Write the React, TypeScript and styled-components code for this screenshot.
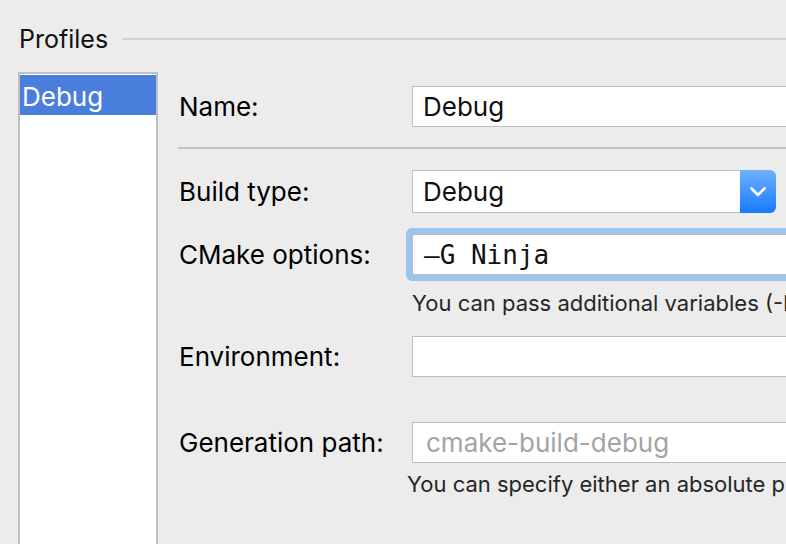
import React from "react";
import styled, { createGlobalStyle } from "styled-components";

const GlobalStyle = createGlobalStyle`
  html, body {
    margin: 0;
    padding: 0;
    background: #ececec;
  }
  body {
    width: 786px;
    height: 544px;
    overflow: hidden;
    font-family: Inter, "Liberation Sans", sans-serif;
    -webkit-font-smoothing: antialiased;
  }
`;

const Page = styled.div`
  width: 786px;
  height: 544px;
  overflow: hidden;
  box-sizing: border-box;
  padding-left: 18px;
  display: flex;
  flex-direction: column;
  background: #ececec;
`;

const Legend = styled.div`
  display: flex;
  align-items: center;
  height: 30px;
  margin-top: 24px;
  padding-left: 1px;
`;

const LegendTitle = styled.span`
  font-size: 25px;
  line-height: 30px;
  color: #111;
`;

const LegendRule = styled.div`
  flex: 1;
  height: 2px;
  margin-left: 14px;
  margin-top: 0px;
  background: #d2d2d2;
`;

const Main = styled.div`
  flex: 1;
  display: flex;
  margin-top: 18px;
  min-height: 0;
`;

const ProfileList = styled.div`
  width: 140px;
  flex: none;
  box-sizing: border-box;
  border: 2px solid #c1c1c1;
  border-bottom: none;
  background: #fff;
  padding-top: 1px;
  height: 520px;
`;

const ProfileItem = styled.div<{ $selected?: boolean }>`
  height: 40px;
  display: flex;
  align-items: center;
  padding-left: 2px;
  padding-top: 2px;
  box-sizing: border-box;
  font-size: 26px;
  color: ${(p) => (p.$selected ? "#fff" : "#000")};
  background: ${(p) => (p.$selected ? "#4a7edc" : "transparent")};
`;

const Form = styled.div`
  flex: 1;
  display: flex;
  flex-direction: column;
  margin-left: 20px;
  padding-top: 14px;
  min-width: 0;
`;

const FieldRow = styled.div<{ $gap: number }>`
  display: grid;
  grid-template-columns: 234px 1fr;
  align-items: center;
  margin-top: ${(p) => p.$gap}px;
`;

const Label = styled.label`
  font-size: 26px;
  line-height: 41px;
  color: #000;
  padding-left: 1px;
  white-space: nowrap;
`;

const TextBox = styled.div<{ $pad?: number; $mono?: boolean; $focused?: boolean; $placeholder?: boolean }>`
  height: 41px;
  width: 420px;
  box-sizing: border-box;
  border: 1px solid #bdbdbd;
  background: #fff;
  display: flex;
  align-items: center;
  padding-left: ${(p) => p.$pad ?? 10}px;
  font-family: ${(p) => (p.$mono ? '"DejaVu Sans Mono", "Liberation Mono", monospace' : 'Inter, "Liberation Sans", sans-serif')};
  font-size: 26px;
  color: ${(p) => (p.$placeholder ? "#a4a4a4" : "#111")};
  white-space: nowrap;
  box-shadow: ${(p) => (p.$focused ? "0 0 0 6px #9dc3f1" : "none")};
  border-radius: ${(p) => (p.$focused ? "2px" : "0")};
`;

const Combo = styled.div`
  height: 43px;
  width: 364px;
  display: flex;
`;

const ComboValue = styled.div`
  flex: 1;
  box-sizing: border-box;
  border: 1px solid #bdbdbd;
  border-right: none;
  background: #fff;
  display: flex;
  align-items: center;
  padding-left: 10px;
  font-size: 26px;
  color: #111;
`;

const ComboButton = styled.div`
  width: 36px;
  flex: none;
  border-radius: 0 6px 6px 0;
  background: linear-gradient(#6fb0ff, #157bff);
  display: flex;
  align-items: center;
  justify-content: center;
`;

const Divider = styled.div`
  height: 2px;
  margin-top: 20px;
  background: #c4c4c4;
`;

const Hint = styled.div<{ $gap: number; $indent: number }>`
  margin-top: ${(p) => p.$gap}px;
  padding-left: ${(p) => p.$indent}px;
  font-size: 22px;
  line-height: 26px;
  color: #262626;
  white-space: nowrap;
`;

const Chevron = () => (
  <svg width="16" height="10" viewBox="0 0 16 10">
    <path d="M1.5 1.5 L8 8 L14.5 1.5" fill="none" stroke="#fff" strokeWidth="2.6" strokeLinecap="round" strokeLinejoin="round" />
  </svg>
);

export default function App() {
  return (
    <>
      <GlobalStyle />
      <Page>
        <Legend>
          <LegendTitle>Profiles</LegendTitle>
          <LegendRule />
        </Legend>
        <Main>
          <ProfileList>
            <ProfileItem $selected>Debug</ProfileItem>
          </ProfileList>
          <Form>
            <FieldRow $gap={0}>
              <Label>Name:</Label>
              <TextBox>Debug</TextBox>
            </FieldRow>
            <Divider />
            <FieldRow $gap={21}>
              <Label>Build type:</Label>
              <Combo>
                <ComboValue>Debug</ComboValue>
                <ComboButton>
                  <Chevron />
                </ComboButton>
              </Combo>
            </FieldRow>
            <FieldRow $gap={21}>
              <Label>CMake options:</Label>
              <TextBox $mono $focused $pad={11}>–G Ninja</TextBox>
            </FieldRow>
            <Hint $gap={15} $indent={234}>You can pass additional variables (-D&lt;name&gt;=&lt;value&gt;) here</Hint>
            <FieldRow $gap={20}>
              <Label>Environment:</Label>
              <TextBox />
            </FieldRow>
            <FieldRow $gap={45}>
              <Label>Generation path:</Label>
              <TextBox $placeholder $pad={13}>cmake-build-debug</TextBox>
            </FieldRow>
            <Hint $gap={8} $indent={229}>You can specify either an absolute path or a relative one</Hint>
          </Form>
        </Main>
      </Page>
    </>
  );
}
